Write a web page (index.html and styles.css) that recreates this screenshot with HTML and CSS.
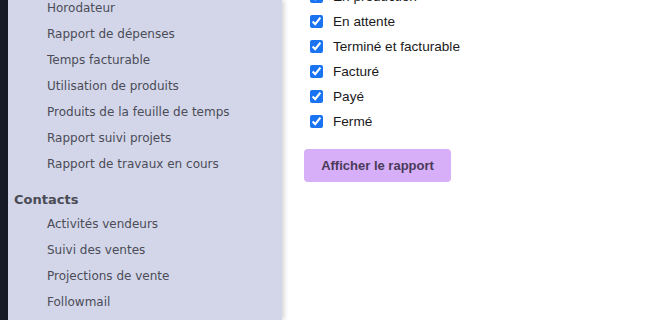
FILE: index.html
```html
<!DOCTYPE html>
<html lang="fr">
<head>
  <meta charset="UTF-8" />
  <title>Rapports</title>
  <link rel="stylesheet" href="styles.css">
</head>
<body>
  <div class="layout">
    <div class="rail"></div>

    <nav class="sidebar">
      <ul class="menu">
        <li>Horodateur</li>
        <li>Rapport de dépenses</li>
        <li>Temps facturable</li>
        <li>Utilisation de produits</li>
        <li>Produits de la feuille de temps</li>
        <li>Rapport suivi projets</li>
        <li>Rapport de travaux en cours</li>
      </ul>
      <h3 class="menu-title">Contacts</h3>
      <ul class="menu">
        <li>Activités vendeurs</li>
        <li>Suivi des ventes</li>
        <li>Projections de vente</li>
        <li>Followmail</li>
      </ul>
    </nav>

    <main class="content">
      <div class="status-list">
        <label><input type="checkbox" checked> En production</label>
        <label><input type="checkbox" checked> En attente</label>
        <label><input type="checkbox" checked> Terminé et facturable</label>
        <label><input type="checkbox" checked> Facturé</label>
        <label><input type="checkbox" checked> Payé</label>
        <label><input type="checkbox" checked> Fermé</label>
      </div>
      <button class="report-btn">Afficher le rapport</button>
    </main>
  </div>
</body>
</html>
```

FILE: styles.css
```css
body {
  margin: 0;
  background: #fff;
  overflow: hidden;
}

.layout {
  display: flex;
  height: 320px;
}

.rail {
  width: 8px;
  background: #161b27;
  flex-shrink: 0;
}

.sidebar {
  width: 274px;
  flex-shrink: 0;
  background: #d3d6e9;
  box-shadow: 2px 0 5px rgba(0, 0, 0, 0.18);
  font-family: 'DejaVu Sans', Verdana, sans-serif;
  font-size: 12px;
  color: #4b4c57;
  z-index: 1;
}

.menu {
  list-style: none;
  margin: 0;
  padding: 0 0 0 39px;
}

.menu:first-child {
  margin-top: -5px;
}

.menu li {
  height: 26px;
  line-height: 26px;
}

.menu-title {
  margin: 12px 0 0;
  padding-left: 6px;
  height: 22px;
  line-height: 22px;
  font-size: 13px;
  font-weight: bold;
  color: #4a4b55;
}

.content {
  flex: 1;
  padding-left: 22px;
  font-family: 'Liberation Sans', Arial, sans-serif;
  font-size: 13.6px;
  color: #1a1a1a;
}

.status-list {
  display: flex;
  flex-direction: column;
  margin-top: -16px;
}

.status-list label {
  display: flex;
  align-items: center;
  gap: 10px;
  height: 25px;
  padding-left: 6px;
}

.status-list input {
  margin: 0;
  width: 13px;
  height: 13px;
  accent-color: #1a73f0;
}

.report-btn {
  margin-top: 15px;
  width: 147px;
  height: 33px;
  border: none;
  border-radius: 4px;
  background: #d7aef8;
  color: #4a3b58;
  font-family: 'Liberation Sans', Arial, sans-serif;
  font-size: 13px;
  font-weight: bold;
  cursor: pointer;
}
```
